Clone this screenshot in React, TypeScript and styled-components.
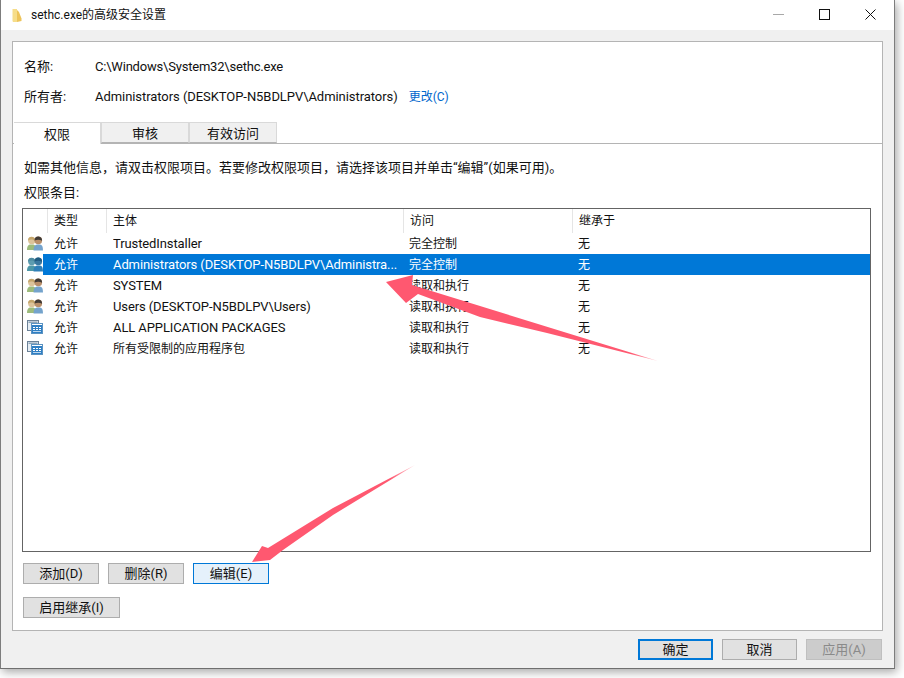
import * as React from 'react';
import styled, { createGlobalStyle } from 'styled-components';

const GlobalStyle = createGlobalStyle`
  html, body {
    margin: 0;
    padding: 0;
    background: #ffffff;
  }
  body {
    font-family: Roboto, "Noto Sans CJK SC", sans-serif;
    font-size: 13px;
    color: #111111;
  }
  * {
    box-sizing: border-box;
  }
`;

const Stage = styled.div`
  position: relative;
  width: 904px;
  height: 678px;
  overflow: hidden;
`;

const Window = styled.div`
  width: 895px;
  height: 669px;
  display: flex;
  flex-direction: column;
  background: #f0f0f0;
  border-left: 1px solid #7d7d7d;
  border-right: 1px solid #7d7d7d;
  border-bottom: 1px solid #6f6f6f;
  box-shadow: 2px 3px 9px rgba(0, 0, 0, 0.35);
`;

const TitleBar = styled.div`
  height: 30px;
  flex: none;
  display: flex;
  align-items: center;
  background: #ffffff;
  padding-left: 10px;
`;

const TitleText = styled.span`
  margin-left: 8px;
  font-size: 12px;
  line-height: 16px;
`;

const WindowButtons = styled.div`
  margin-left: auto;
  display: flex;
  padding-right: 1px;
`;

const WindowButton = styled.div`
  width: 46px;
  height: 30px;
  display: flex;
  align-items: center;
  justify-content: center;
  margin-top: -2px;
`;

const Body = styled.div`
  flex: 1;
  display: flex;
  flex-direction: column;
  padding: 11px 11px 0 11px;
`;

const Panel = styled.div`
  height: 590px;
  width: 871px;
  flex: none;
  background: #ffffff;
  border: 1px solid #b4b4b4;
  display: flex;
  flex-direction: column;
`;

const InfoRow = styled.div<{ $top: number }>`
  margin-top: ${(p) => p.$top}px;
  height: 18px;
  line-height: 18px;
  display: grid;
  grid-template-columns: 71px auto auto 1fr;
  padding-left: 11px;
  white-space: nowrap;
`;

const InfoValue = styled.span<{ $track: number }>`
  letter-spacing: ${(p) => p.$track}px;
`;

const OwnerLink = styled.span`
  margin-left: 11px;
  font-size: 12px;
  color: #0066cc;
`;

const TabStrip = styled.div`
  margin-top: 16px;
  height: 22px;
  flex: none;
  display: flex;
  align-items: flex-end;
  padding-left: 1px;
  border-bottom: 1px solid #b4b4b4;
`;

const Tab = styled.div<{ $active?: boolean; $width: number }>`
  width: ${(p) => p.$width}px;
  height: ${(p) => (p.$active ? 22 : 21)}px;
  margin-bottom: ${(p) => (p.$active ? -1 : 0)}px;
  display: flex;
  align-items: center;
  justify-content: center;
  background: ${(p) => (p.$active ? '#ffffff' : '#f0f0f0')};
  border: 1px solid #d9d9d9;
  border-bottom: ${(p) => (p.$active ? 'none' : '1px solid #b4b4b4')};
  border-left: ${(p) => (p.$active ? 'none' : '1px solid #d9d9d9')};
`;

const Hint = styled.div`
  margin: 15px 0 0 11px;
  height: 18px;
  line-height: 18px;
  white-space: nowrap;
`;

const ListLabel = styled.div`
  margin: 7px 0 0 11px;
  height: 18px;
  line-height: 18px;
`;

const ListBox = styled.div`
  margin: 6px 0 0 9px;
  width: 849px;
  height: 344px;
  flex: none;
  border: 1px solid #646464;
  background: #ffffff;
`;

const HeaderRow = styled.div`
  height: 24px;
  display: grid;
  grid-template-columns: 25px 59px 297px 169px 1fr;
  grid-template-rows: 24px;
  font-size: 12px;
`;

const HeaderCell = styled.div`
  border-right: 1px solid #e5e5e5;
  padding-left: 6px;
  line-height: 25px;
  &:last-child {
    border-right: none;
  }
`;

const EntryRow = styled.div`
  height: 21px;
  display: grid;
  grid-template-columns: 20px 70px 296px 169px 1fr;
  grid-template-rows: 21px;
  line-height: 21px;
  white-space: nowrap;
`;

const IconCell = styled.div`
  padding: 3px 0 0 4px;
  height: 21px;
`;

const EntryCell = styled.div<{ $selected?: boolean; $pad?: number; $latin?: boolean }>`
  background: ${(p) => (p.$selected ? '#0078d7' : 'transparent')};
  color: ${(p) => (p.$selected ? '#ffffff' : '#111111')};
  padding-left: ${(p) => p.$pad ?? 0}px;
  padding-top: ${(p) => (p.$latin ? 0 : 1)}px;
  font-size: ${(p) => (p.$latin ? 13 : 12)}px;
  letter-spacing: ${(p) => (p.$latin ? '-0.1px' : '0')};
  overflow: hidden;
`;

const ActionRow = styled.div<{ $top: number }>`
  margin: ${(p) => p.$top}px 0 0 10px;
  display: flex;
  gap: 9px;
`;

const Button = styled.div<{ $width: number; $focus?: 'soft' | 'strong'; $disabled?: boolean }>`
  width: ${(p) => p.$width}px;
  height: 21px;
  flex: none;
  display: flex;
  align-items: center;
  justify-content: center;
  line-height: 19px;
  background: ${(p) => (p.$focus === 'soft' ? '#e5f1fb' : p.$disabled ? '#cccccc' : '#e1e1e1')};
  color: ${(p) => (p.$disabled ? '#8a8a8a' : '#111111')};
  border: ${(p) => (p.$focus === 'strong' ? '2px solid #0078d7' : p.$focus === 'soft' ? '1px solid #0078d7' : p.$disabled ? '1px solid #bfbfbf' : '1px solid #adadad')};
`;

const Footer = styled.div`
  margin-top: 8px;
  width: 870px;
  display: flex;
  justify-content: flex-end;
  gap: 9px;
`;

const ArrowLayer = styled.svg`
  position: absolute;
  left: 0;
  top: 0;
  pointer-events: none;
`;

const PeopleIcon: React.FC<{ $selected?: boolean }> = ({ $selected }) => (
  <svg width="16" height="15" viewBox="0 0 16 15" style={{ display: 'block' }}>
    <path d="M0 14 C0 10 1.5 8.5 3.5 8.5 L6.5 8.5 C8.5 9 9 11 9 14 Z" fill={$selected ? '#4d97a8' : '#9dbb7c'} />
    <circle cx="4.8" cy="4.6" r="3.7" fill={$selected ? '#5d9cb0' : '#dcc39a'} />
    <path d="M1 4.5 C1 1.6 3 0.6 5 0.8 C7 1 8.6 2.6 8.2 5 C6.5 3.6 3.5 3 1 4.5 Z" fill={$selected ? '#4d8aa0' : '#c4a56a'} />
    <path d="M6.5 14.6 C6.5 10.5 8 8.5 10 8.5 L13 8.5 C15 8.5 16 10.8 16 14.6 Z" fill={$selected ? '#2f7fb8' : '#74a3cc'} />
    <circle cx="11.3" cy="4.4" r="3.8" fill={$selected ? '#3a78a0' : '#b98f6a'} />
    <path d="M7.6 4.4 C7.4 1.4 9.4 0.2 11.6 0.4 C13.8 0.6 15.4 2.4 15 4.8 C13 3.4 10 3.4 7.6 4.4 Z" fill={$selected ? '#1f5a80' : '#3f3a36'} />
  </svg>
);

const PackageIcon: React.FC = () => (
  <svg width="16" height="14" viewBox="0 0 16 14" style={{ display: 'block' }}>
    <rect x="0.5" y="0.5" width="11" height="10" fill="#e6edf3" stroke="#6c8297" />
    <rect x="1.5" y="1.5" width="9" height="1.5" fill="#8fa6ba" />
    <rect x="4.5" y="3.5" width="11" height="10" fill="#ffffff" stroke="#5b93c2" />
    <rect x="5" y="5" width="10" height="8" fill="#2f7fc4" />
    <rect x="6" y="7" width="2" height="1" fill="#ffffff" />
    <rect x="9" y="7" width="2" height="1" fill="#ffffff" />
    <rect x="12" y="7" width="2" height="1" fill="#ffffff" />
    <rect x="6" y="9" width="2" height="1" fill="#ffffff" />
    <rect x="9" y="9" width="2" height="1" fill="#ffffff" />
    <rect x="12" y="9" width="2" height="1" fill="#ffffff" />
    <rect x="6" y="11" width="8" height="1" fill="#bcd7ee" />
  </svg>
);

const FolderIcon: React.FC = () => (
  <svg width="12" height="15" viewBox="0 0 12 15">
    <path d="M1.5 1 L6 1 L6 14 L2 14 L1.5 13 Z" fill="#f6dd8a" />
    <path d="M6 2 L8 4 L10.5 10.5 L10.5 13 L6 14 Z" fill="#edc45a" />
  </svg>
);

type Entry = {
  icon: 'people' | 'package';
  subject: string;
  access: string;
  selected?: boolean;
  han?: boolean;
};

const entries: Entry[] = [
  { icon: 'people', subject: 'TrustedInstaller', access: '完全控制' },
  { icon: 'people', subject: 'Administrators (DESKTOP-N5BDLPV\\Administra...', access: '完全控制', selected: true },
  { icon: 'people', subject: 'SYSTEM', access: '读取和执行' },
  { icon: 'people', subject: 'Users (DESKTOP-N5BDLPV\\Users)', access: '读取和执行' },
  { icon: 'package', subject: 'ALL APPLICATION PACKAGES', access: '读取和执行' },
  { icon: 'package', subject: '所有受限制的应用程序包', access: '读取和执行', han: true },
];

export default function App() {
  return (
    <Stage>
      <GlobalStyle />
      <Window>
        <TitleBar>
          <FolderIcon />
          <TitleText>sethc.exe的高级安全设置</TitleText>
          <WindowButtons>
            <WindowButton>
              <svg width="11" height="11" viewBox="0 0 11 11">
                <path d="M0 5.5 H11" stroke="#a8a8a8" fill="none" />
              </svg>
            </WindowButton>
            <WindowButton>
              <svg width="11" height="11" viewBox="0 0 11 11">
                <rect x="0.5" y="0.5" width="10" height="10" fill="none" stroke="#111111" />
              </svg>
            </WindowButton>
            <WindowButton>
              <svg width="11" height="11" viewBox="0 0 11 11">
                <path d="M0.5 0.5 L10.5 10.5 M10.5 0.5 L0.5 10.5" stroke="#111111" fill="none" />
              </svg>
            </WindowButton>
          </WindowButtons>
        </TitleBar>
        <Body>
          <Panel>
            <InfoRow $top={16}>
              <span>名称:</span>
              <InfoValue $track={-0.2}>C:\Windows\System32\sethc.exe</InfoValue>
            </InfoRow>
            <InfoRow $top={12}>
              <span>所有者:</span>
              <InfoValue $track={-0.06}>Administrators (DESKTOP-N5BDLPV\Administrators)</InfoValue>
              <OwnerLink>更改(C)</OwnerLink>
            </InfoRow>
            <TabStrip>
              <Tab $active $width={87}>权限</Tab>
              <Tab $width={88}>审核</Tab>
              <Tab $width={88}>有效访问</Tab>
            </TabStrip>
            <Hint>如需其他信息，请双击权限项目。若要修改权限项目，请选择该项目并单击“编辑”(如果可用)。</Hint>
            <ListLabel>权限条目:</ListLabel>
            <ListBox>
              <HeaderRow>
                <HeaderCell />
                <HeaderCell>类型</HeaderCell>
                <HeaderCell>主体</HeaderCell>
                <HeaderCell>访问</HeaderCell>
                <HeaderCell>继承于</HeaderCell>
              </HeaderRow>
              {entries.map((entry) => (
                <EntryRow key={entry.subject}>
                  <IconCell>
                    {entry.icon === 'people' ? <PeopleIcon $selected={entry.selected} /> : <PackageIcon />}
                  </IconCell>
                  <EntryCell $selected={entry.selected} $pad={11}>允许</EntryCell>
                  <EntryCell $selected={entry.selected} $latin={!entry.han}>{entry.subject}</EntryCell>
                  <EntryCell $selected={entry.selected}>{entry.access}</EntryCell>
                  <EntryCell $selected={entry.selected}>无</EntryCell>
                </EntryRow>
              ))}
            </ListBox>
            <ActionRow $top={11}>
              <Button $width={76}>添加(D)</Button>
              <Button $width={76}>删除(R)</Button>
              <Button $width={76} $focus="soft">编辑(E)</Button>
            </ActionRow>
            <ActionRow $top={13}>
              <Button $width={97}>启用继承(I)</Button>
            </ActionRow>
          </Panel>
          <Footer>
            <Button $width={75} $focus="strong">确定</Button>
            <Button $width={75}>取消</Button>
            <Button $width={76} $disabled>应用(A)</Button>
          </Footer>
        </Body>
      </Window>
      <ArrowLayer width="904" height="678" viewBox="0 0 904 678">
        <defs>
          <linearGradient id="fadeOne" gradientUnits="userSpaceOnUse" x1="386" y1="282" x2="658" y2="361">
            <stop offset="0.9" stopColor="#ff5870" />
            <stop offset="1" stopColor="#ff5870" stopOpacity="0.4" />
          </linearGradient>
          <linearGradient id="fadeTwo" gradientUnits="userSpaceOnUse" x1="252" y1="562" x2="415" y2="465">
            <stop offset="0.85" stopColor="#ff5870" />
            <stop offset="1" stopColor="#ff5870" stopOpacity="0.3" />
          </linearGradient>
        </defs>
        <polygon points="386,282 413,275 412,285 658,361 547,333 480,317 418,294 406,303" fill="url(#fadeOne)" />
        <polygon points="252,562 262,546 268,548 333,508 415,465 333,515 283,550 270,560" fill="url(#fadeTwo)" />
      </ArrowLayer>
    </Stage>
  );
}
